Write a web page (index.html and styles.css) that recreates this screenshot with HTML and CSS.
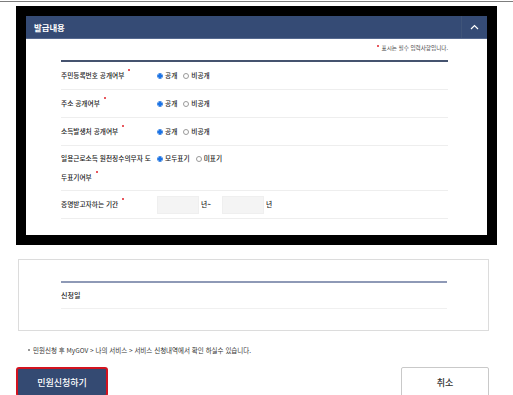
FILE: index.html
```html
<!DOCTYPE html>
<html lang="ko">
<head>
<meta charset="utf-8">
<title>발급내용</title>
<link rel="stylesheet" href="styles.css">
</head>
<body>
<div class="topline"></div>

<section class="frame">
  <div class="panel-head">
    <h2 class="panel-title">발급내용</h2>
    <div class="toggle" role="button" aria-label="접기">
      <svg width="9" height="6" viewBox="0 0 9 6"><path d="M1 5 L4.5 1.5 L8 5" fill="none" stroke="#fff" stroke-width="1.2"/></svg>
    </div>
  </div>
  <div class="panel-body">
    <p class="req-note"><span class="dot note-dot"></span> 표시는 필수 입력사항입니다.</p>
    <div class="form-table">
      <div class="row">
        <div class="label">주민등록번호 공개여부<span class="dot"></span></div>
        <div class="field">
          <span class="opt"><span class="radio on"></span>공개</span>
          <span class="opt"><span class="radio"></span>비공개</span>
        </div>
      </div>
      <div class="row">
        <div class="label">주소 공개여부<span class="dot"></span></div>
        <div class="field">
          <span class="opt"><span class="radio on"></span>공개</span>
          <span class="opt"><span class="radio"></span>비공개</span>
        </div>
      </div>
      <div class="row">
        <div class="label">소득발생처 공개여부<span class="dot"></span></div>
        <div class="field">
          <span class="opt"><span class="radio on"></span>공개</span>
          <span class="opt"><span class="radio"></span>비공개</span>
        </div>
      </div>
      <div class="row row-tall">
        <div class="label nowrap">일용근로소득 원천징수의무자 도<br>두표기여부<span class="dot"></span></div>
        <div class="field field-top">
          <span class="opt"><span class="radio on"></span>모두표기</span>
          <span class="opt"><span class="radio"></span>미표기</span>
        </div>
      </div>
      <div class="row">
        <div class="label">증명받고자하는 기간<span class="dot"></span></div>
        <div class="field">
          <span class="year-box"></span><span class="unit">년~</span>
          <span class="year-box"></span><span class="unit">년</span>
        </div>
      </div>
    </div>
  </div>
</section>

<section class="date-box">
  <div class="date-table">
    <div class="date-row">신청일</div>
  </div>
</section>

<p class="guide"><span class="bullet"></span>민원신청 후 MyGOV &gt; 나의 서비스 &gt; 서비스 신청내역에서 확인 하실수 있습니다.</p>

<div class="actions">
  <button class="btn btn-primary" type="button">민원신청하기</button>
  <button class="btn btn-cancel" type="button">취소</button>
</div>
</body>
</html>
```

FILE: styles.css
```css
* { box-sizing: border-box; }

body {
  margin: 0;
  padding-top: 1px;
  background: #fff;
  font-family: "Noto Sans CJK KR", "Noto Sans", sans-serif;
  color: #222;
}

.topline {
  height: 1px;
  background: #7d7d7d;
}

.frame {
  margin: 4px 0 0 16px;
  width: 481px;
  border: 10px solid #000;
  background: #fff;
}

.panel-head {
  display: flex;
  height: 23px;
  background: #354b75;
  border-bottom: 1px solid #56698f;
}

.panel-title {
  flex: 1;
  margin: 0;
  padding-left: 8px;
  font-size: 8.4px;
  font-weight: 700;
  line-height: 22px;
  color: #fff;
}

.toggle {
  width: 26px;
  background: #354b75;
  border-left: 1px solid #3f5479;
  display: flex;
  align-items: center;
  justify-content: center;
}

.panel-body {
  padding: 5px 39px 16px 35px;
}

.req-note {
  margin: 0 0 7px;
  text-align: right;
  font-size: 5.6px;
  line-height: 9px;
  color: #444;
}

.dot {
  display: inline-block;
  width: 2px;
  height: 2px;
  margin-left: 4px;
  border-radius: 50%;
  background: #e0202a;
  vertical-align: 7px;
}

.note-dot {
  margin: 0 1px 0 0;
  vertical-align: 3px;
}

.form-table {
  border-top: 2px solid #45536f;
}

.row {
  display: grid;
  grid-template-columns: 96px 1fr;
  align-items: center;
  padding: 4px 0;
  border-bottom: 1px solid #eeeeee;
  font-size: 6.7px;
  font-weight: 500;
  line-height: 19px;
}

.row-tall {
  padding: 3px 0;
}

.label {
  color: #222;
}

.nowrap {
  white-space: nowrap;
}

.field {
  display: flex;
  align-items: center;
  height: 19px;
}

.field-top {
  align-self: start;
}

.opt {
  display: inline-flex;
  align-items: center;
  margin-right: 6px;
  color: #222;
}

.radio {
  display: inline-block;
  width: 6px;
  height: 6px;
  margin-right: 2px;
  border: 1px solid #9a9a9a;
  border-radius: 50%;
  background: #fff;
}

.radio.on {
  border-color: #2f7de1;
  background: radial-gradient(circle, #1a73e8 0 1.6px, #fff 2px);
}

.year-box {
  display: inline-block;
  width: 42px;
  height: 18px;
  background: #f4f4f4;
  border: 1px solid #efefef;
}

.unit {
  margin: 0 11px 0 2px;
}

.date-box {
  margin: 14px 0 0 18px;
  width: 471px;
  border: 1px solid #dcdcdc;
  padding: 21px 41px 21px 42px;
}

.date-table {
  border-top: 2px solid #8e99b6;
}

.date-row {
  padding: 3px 0;
  border-bottom: 1px solid #f0f0f0;
  font-size: 7px;
  font-weight: 500;
  line-height: 19px;
  color: #222;
}

.guide {
  margin: 14px 0 0 28px;
  font-size: 6.5px;
  line-height: 10px;
  color: #333;
  display: flex;
  align-items: center;
}

.bullet {
  display: inline-block;
  width: 2px;
  height: 2px;
  margin-right: 3px;
  background: #999;
}

.actions {
  display: flex;
  justify-content: space-between;
  width: 473px;
  margin: 12px 0 0 16px;
}

.btn {
  height: 30px;
  padding: 0;
  font-family: inherit;
  font-size: 9px;
  font-weight: 500;
  border-radius: 3px;
}

.btn-primary {
  width: 92px;
  background: #344a72;
  color: #fff;
  border: 2px solid #d3131f;
}

.btn-cancel {
  width: 88px;
  background: #fff;
  color: #333;
  border: 1px solid #c9c9c9;
  border-radius: 2px;
}
```
